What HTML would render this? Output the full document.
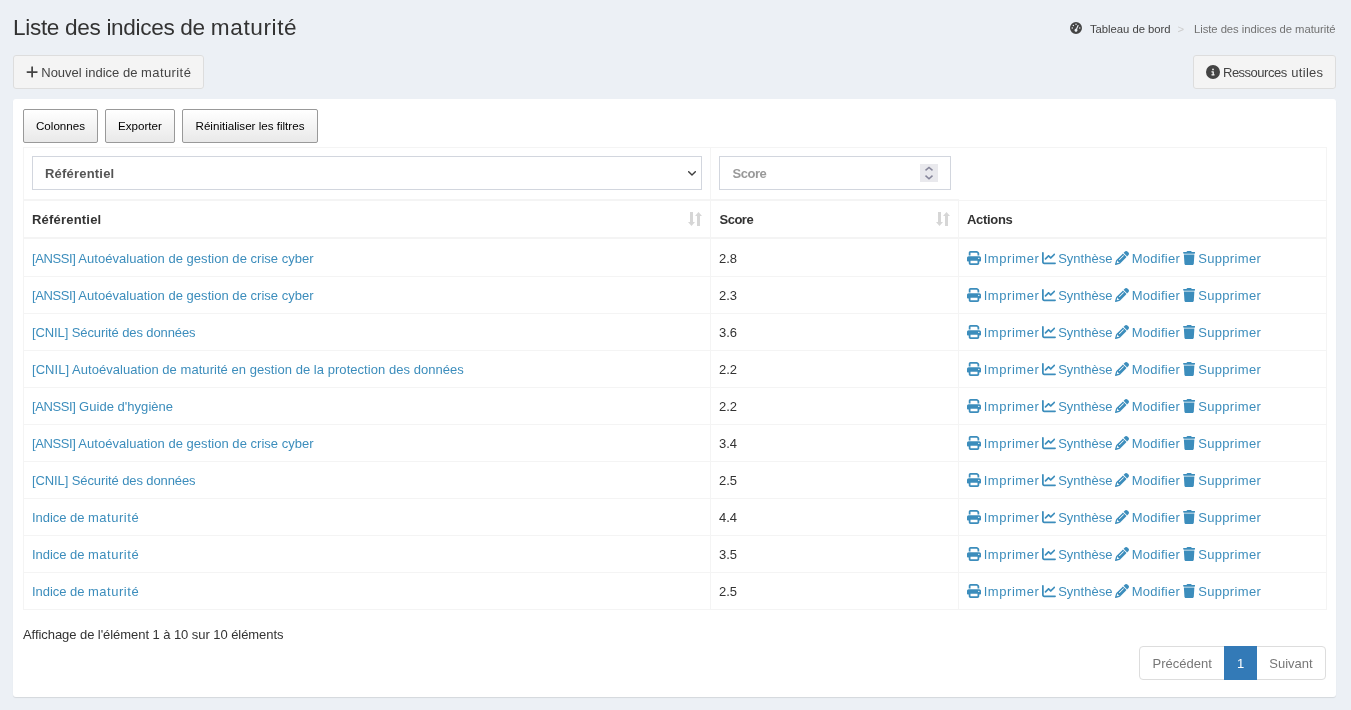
<!DOCTYPE html>
<html lang="fr">
<head>
<meta charset="utf-8">
<title>Liste des indices de maturité</title>
<style>
*{box-sizing:border-box}
html,body{margin:0;padding:0}
body{width:1351px;height:710px;overflow:hidden;background:#ecf0f5;color:#333;font-family:"Liberation Sans",sans-serif;font-size:13px;line-height:20px;position:relative}
a{color:#3c8dbc;text-decoration:none}
svg{display:inline-block;fill:currentColor;vertical-align:middle}
i{font-style:normal}
h1{position:absolute;left:13px;top:11px;margin:0;font-size:22.6px;line-height:34px;font-weight:400;color:#333;white-space:nowrap}
.t1{letter-spacing:-0.33px}
.t2{letter-spacing:0.6px}
.breadcrumb{position:absolute;left:0;top:19px;width:1351px;height:20px;margin:0;padding:0;list-style:none;font-size:11.3px;line-height:20px;white-space:nowrap;color:#727272}
.breadcrumb li{position:absolute;top:0;display:block}
.breadcrumb li a{color:#444}
.breadcrumb .gi{position:absolute;left:-19.600px;top:3px}
.breadcrumb .b1{left:1090px;letter-spacing:-0.04px}
.breadcrumb .sep{left:1177.500px;color:#ccc}
.breadcrumb .b2{left:1194px;letter-spacing:-0.06px}
.btn{position:absolute;top:55px;height:34px;border:1px solid #ddd;border-radius:3px;background:#f4f4f4;color:#444;font-size:13px;line-height:32px;padding:1px 12px 0;white-space:nowrap}
.btn1{left:13px;width:191px}
.btn2{left:1193px;width:143px}
.btn svg{position:relative;top:-1.900px;margin-right:3px}
.n1{letter-spacing:0}
.n2{letter-spacing:0.42px}
.u1{letter-spacing:-0.5px}
.u2{letter-spacing:0.3px;margin-left:1.500px}
.box{position:absolute;left:13px;top:99px;width:1323px;height:598px;background:#fff;border-radius:3px;box-shadow:0 1px 1px rgba(0,0,0,.1)}
.dtb{position:absolute;top:10px;height:34px;border:1px solid #999;border-radius:2px;background:linear-gradient(to bottom,#fff 0%,#e9e9e9 100%);color:#000;font-size:11.6px;line-height:32px;text-align:center;white-space:nowrap}
.d1{left:10px;width:75px}
.d2{left:92px;width:70px}
.d3{left:169px;width:136px}
table{position:absolute;left:10px;top:48px;width:1303px;border-collapse:collapse;table-layout:fixed;border:1px solid #f4f4f4}
th,td{border:1px solid #f4f4f4;padding:9px 8px 7px;text-align:left;vertical-align:middle;line-height:20px;white-space:nowrap;overflow:hidden}
thead th{border-bottom:2px solid #f4f4f4;font-weight:700;color:#333;position:relative}
tbody td{height:37px}
tbody tr:first-child td{padding-top:10px}
.fr th,.fr td{padding:8px 8px 9px}
.fr th:nth-child(2){border-right:none}
.sel,.inp{display:block;height:34px;border:1px solid #d2d6de;background:#fff;font-weight:700;font-size:13px;line-height:32px;padding:1px 12px 0;position:relative}
.sel{color:#555;width:670px}
.inp{color:#999;width:232px}
.chev{position:absolute;right:5px;top:14px}
.spin{position:absolute;right:12px;top:7px;width:18px;height:18px;background:#e9e9ed;display:block}
.spin svg{position:absolute;left:0;top:0}
.sort{position:absolute;right:8px;top:11px;line-height:14px;height:14px;width:14px}
.sort svg{display:block}
.info{position:absolute;left:10px;top:526px;line-height:20px;white-space:nowrap}
.pag{position:absolute;right:10px;top:547px;height:34px;display:flex;font-size:13px;line-height:32px}
.pag b{font-weight:400}
.pag span{display:block;border:1px solid #ddd;margin-left:-1px;padding:1px 0 0;text-align:center;color:#777;background:#fff}
.pag span.first{border-radius:4px 0 0 4px;margin-left:0;width:85.600px}
.pag span.last{border-radius:0 4px 4px 0;width:70px}
.pag span.act{background:#337ab7;border-color:#337ab7;color:#fff;width:33px;position:relative;z-index:2}
.acts{position:relative}
.acts div{position:relative;height:20px}
.acts a{position:absolute;top:0;left:0;display:block;white-space:nowrap}
.acts svg{margin-right:2.700px;position:relative;top:-1.900px}
.acts .a2{left:74.800px}
.acts .a3{left:148.100px}
.acts .a4{left:216.200px}
.a1 span{letter-spacing:0.55px}
.a2 span{letter-spacing:0;margin-left:-0.300px}
.a3 span{letter-spacing:0.25px}
.a4 span{letter-spacing:0.34px}
.pa{letter-spacing:-0.4px}
.r1{letter-spacing:0.03px}
.r2{letter-spacing:-0.1px}
.r3{letter-spacing:0.045px}
.r4{letter-spacing:0.03px}
.i1{letter-spacing:-0.05px}
.i2{letter-spacing:0.55px}
.h1t{letter-spacing:0.2px}
.h2t{letter-spacing:-0.5px;margin-left:0.500px}
.h3t{letter-spacing:-0.32px}
.sel span{letter-spacing:0.2px}
.inp span{letter-spacing:-0.5px;margin-left:0.600px}
.info span{letter-spacing:-0.06px}
h1,.btn,.box,.breadcrumb{will-change:transform}
</style>
</head>
<body>
<h1><span class="t1">Liste des indices de </span><span class="t2">maturité</span></h1>
<ol class="breadcrumb">
<li class="b1"><a><svg class="gi" width="12" height="12" viewBox="0 0 512 512" style=""><path d="M0 256a256 256 0 1 1 512 0A256 256 0 1 1 0 256zM288 96a32 32 0 1 0 -64 0 32 32 0 1 0 64 0zM256 416c35.300 0 64-28.700 64-64c0-17.400-6.900-33.100-18.100-44.600L366 161.700c5.300-12.100-.2-26.300-12.300-31.600s-26.300 .2-31.600 12.300L257.900 288c-.6 0-1.300 0-1.900 0c-35.300 0-64 28.700-64 64s28.700 64 64 64zM176 144a32 32 0 1 0 -64 0 32 32 0 1 0 64 0zM96 288a32 32 0 1 0 0-64 32 32 0 1 0 0 64zm352-32a32 32 0 1 0 -64 0 32 32 0 1 0 64 0z"/></svg><span>Tableau de bord</span></a></li><li class="sep">&gt;</li><li class="b2">Liste des indices de maturité</li>
</ol>
<a class="btn btn1"><svg class="pi" width="12.25" height="14" viewBox="0 0 448 512" style=""><path d="M256 80c0-17.700-14.300-32-32-32s-32 14.300-32 32V224H48c-17.700 0-32 14.300-32 32s14.300 32 32 32H192V432c0 17.700 14.300 32 32 32s32-14.300 32-32V288H400c17.700 0 32-14.300 32-32s-14.300-32-32-32H256V80z"/></svg><span class="n1">Nouvel indice de </span><span class="n2">maturité</span></a>
<a class="btn btn2"><svg class="ii" width="14" height="14" viewBox="0 0 512 512" style=""><path d="M256 512A256 256 0 1 0 256 0a256 256 0 1 0 0 512zM216 336h24V272H216c-13.300 0-24-10.700-24-24s10.700-24 24-24h48c13.300 0 24 10.700 24 24v88h8c13.300 0 24 10.700 24 24s-10.700 24-24 24H216c-13.300 0-24-10.700-24-24s10.700-24 24-24zm40-208a32 32 0 1 1 0 64 32 32 0 1 1 0-64z"/></svg><span class="u1">Ressources </span><span class="u2">utiles</span></a>
<div class="box">
<span class="dtb d1"><span>Colonnes</span></span>
<span class="dtb d2"><span>Exporter</span></span>
<span class="dtb d3"><span>Réinitialiser les filtres</span></span>
<table>
<colgroup><col style="width:687px"><col style="width:248px"><col style="width:368px"></colgroup>
<thead>
<tr class="fr"><th><span class="sel"><span>Référentiel</span><svg class="chev" width="8" height="5" viewBox="0 0 8 5"><path d="M0.700 0.700L4 4 7.300 0.700" fill="none" stroke="#3d3d3d" stroke-width="1.400" stroke-linecap="round" stroke-linejoin="round"/></svg></span></th><th><span class="inp"><span>Score</span><i class="spin"><svg width="18" height="18" viewBox="0 0 18 18"><path d="M5.500 6.400L9 3.400 12.500 6.400M5.500 11.600L9 14.700 12.500 11.600" fill="none" stroke="#85859a" stroke-width="1.500"/></svg></i></span></th></tr>
<tr class="hr"><th><span class="h1t">Référentiel</span><i class="sort"><svg width="14" height="14" viewBox="0 0 14 14"><path d="M2 0h3v10h2L3.500 14 0 10h2zM9 14h3V4h2L10.500 0 7 4h2z" fill="#d6d6d6"/></svg></i></th><th><span class="h2t">Score</span><i class="sort"><svg width="14" height="14" viewBox="0 0 14 14"><path d="M2 0h3v10h2L3.500 14 0 10h2zM9 14h3V4h2L10.500 0 7 4h2z" fill="#d6d6d6"/></svg></i></th><th><span class="h3t">Actions</span></th></tr>
</thead>
<tbody>
<tr><td><a class="ref r1"><span class="pa">[ANSSI]</span> Autoévaluation de gestion de crise cyber</a></td><td>2.8</td><td class="acts"><div><a class="a1"><svg class="" width="14" height="14" viewBox="0 0 512 512" style=""><path d="M128 0C92.700 0 64 28.700 64 64v96h64V64H354.700L384 93.300V160h64V93.300c0-17-6.700-33.300-18.700-45.300L400 18.700C388 6.700 371.700 0 354.700 0H128zM384 352v32 64H128V384 368 352H384zm64 32h32c17.700 0 32-14.300 32-32V256c0-35.300-28.700-64-64-64H64c-35.300 0-64 28.700-64 64v96c0 17.700 14.300 32 32 32H64v64c0 35.300 28.700 64 64 64H384c35.300 0 64-28.700 64-64V384zM432 248a24 24 0 1 1 0 48 24 24 0 1 1 0-48z"/></svg><span>Imprimer</span></a><a class="a2"><svg class="" width="14" height="14" viewBox="0 0 512 512" style=""><path d="M64 64c0-17.700-14.300-32-32-32S0 46.300 0 64V400c0 44.200 35.800 80 80 80H480c17.700 0 32-14.300 32-32s-14.300-32-32-32H80c-8.800 0-16-7.200-16-16V64zm406.600 86.600c12.500-12.500 12.500-32.800 0-45.300s-32.800-12.500-45.300 0L320 210.700l-57.400-57.400c-12.500-12.500-32.800-12.500-45.300 0l-112 112c-12.500 12.500-12.500 32.800 0 45.300s32.800 12.500 45.300 0L240 221.300l57.400 57.400c12.500 12.500 32.800 12.500 45.300 0l128-128z"/></svg><span>Synthèse</span></a><a class="a3"><svg class="" width="14" height="14" viewBox="0 0 512 512" style=""><path d="M410.300 231l11.300-11.300-33.900-33.900-62.100-62.100L291.700 89.800l-11.300 11.300-22.600 22.600L58.600 322.900c-10.400 10.400-18 23.300-22.200 37.400L1 480.700c-2.500 8.400-.2 17.500 6.100 23.700s15.300 8.500 23.700 6.100l120.300-35.400c14.100-4.200 27-11.800 37.400-22.200L387.700 253.700 410.300 231zM160 399.400l-9.100 22.700c-4 3.100-8.500 5.400-13.300 6.900L59.400 452l23-78.100c1.400-4.900 3.800-9.400 6.900-13.300l22.700-9.100v32c0 8.800 7.200 16 16 16h32zM362.700 18.700L348.300 33.200 325.700 55.800 314.300 67.100l33.900 33.900 62.100 62.100 33.900 33.900 11.300-11.300 22.600-22.600 14.500-14.500c25-25 25-65.500 0-90.500L453.300 18.700c-25-25-65.500-25-90.500 0zm-47.400 168l-144 144c-6.200 6.200-16.400 6.200-22.600 0s-6.200-16.400 0-22.600l144-144c6.200-6.200 16.400-6.200 22.600 0s6.200 16.400 0 22.600z"/></svg><span>Modifier</span></a><a class="a4"><svg class="" width="12.25" height="14" viewBox="0 0 448 512" style=""><path d="M135.200 17.700L128 32H32C14.300 32 0 46.300 0 64S14.300 96 32 96H416c17.700 0 32-14.300 32-32s-14.300-32-32-32H320l-7.200-14.300C307.400 6.800 296.300 0 284.200 0H163.800c-12.100 0-23.200 6.800-28.600 17.700zM416 128H32L53.200 467c1.600 25.300 22.600 45 47.900 45H346.900c25.300 0 46.300-19.700 47.900-45L416 128z"/></svg><span>Supprimer</span></a></div></td></tr>
<tr><td><a class="ref r1"><span class="pa">[ANSSI]</span> Autoévaluation de gestion de crise cyber</a></td><td>2.3</td><td class="acts"><div><a class="a1"><svg class="" width="14" height="14" viewBox="0 0 512 512" style=""><path d="M128 0C92.700 0 64 28.700 64 64v96h64V64H354.700L384 93.300V160h64V93.300c0-17-6.700-33.300-18.700-45.300L400 18.700C388 6.700 371.700 0 354.700 0H128zM384 352v32 64H128V384 368 352H384zm64 32h32c17.700 0 32-14.300 32-32V256c0-35.300-28.700-64-64-64H64c-35.300 0-64 28.700-64 64v96c0 17.700 14.300 32 32 32H64v64c0 35.300 28.700 64 64 64H384c35.300 0 64-28.700 64-64V384zM432 248a24 24 0 1 1 0 48 24 24 0 1 1 0-48z"/></svg><span>Imprimer</span></a><a class="a2"><svg class="" width="14" height="14" viewBox="0 0 512 512" style=""><path d="M64 64c0-17.700-14.300-32-32-32S0 46.300 0 64V400c0 44.200 35.800 80 80 80H480c17.700 0 32-14.300 32-32s-14.300-32-32-32H80c-8.800 0-16-7.200-16-16V64zm406.600 86.600c12.500-12.500 12.500-32.800 0-45.300s-32.800-12.500-45.300 0L320 210.700l-57.400-57.400c-12.500-12.500-32.800-12.500-45.300 0l-112 112c-12.500 12.500-12.500 32.800 0 45.300s32.800 12.500 45.300 0L240 221.300l57.400 57.400c12.500 12.500 32.800 12.500 45.300 0l128-128z"/></svg><span>Synthèse</span></a><a class="a3"><svg class="" width="14" height="14" viewBox="0 0 512 512" style=""><path d="M410.300 231l11.300-11.300-33.900-33.900-62.100-62.100L291.700 89.800l-11.300 11.300-22.600 22.600L58.600 322.900c-10.400 10.400-18 23.300-22.200 37.400L1 480.700c-2.500 8.400-.2 17.500 6.100 23.700s15.300 8.500 23.700 6.100l120.300-35.400c14.100-4.200 27-11.800 37.400-22.200L387.700 253.700 410.300 231zM160 399.400l-9.100 22.700c-4 3.100-8.500 5.400-13.300 6.900L59.400 452l23-78.100c1.400-4.900 3.800-9.400 6.900-13.300l22.700-9.100v32c0 8.800 7.200 16 16 16h32zM362.700 18.700L348.300 33.200 325.700 55.800 314.300 67.100l33.900 33.900 62.100 62.100 33.900 33.900 11.300-11.300 22.600-22.600 14.500-14.500c25-25 25-65.500 0-90.500L453.300 18.700c-25-25-65.500-25-90.500 0zm-47.400 168l-144 144c-6.200 6.200-16.400 6.200-22.600 0s-6.200-16.400 0-22.600l144-144c6.200-6.200 16.400-6.200 22.600 0s6.200 16.400 0 22.600z"/></svg><span>Modifier</span></a><a class="a4"><svg class="" width="12.25" height="14" viewBox="0 0 448 512" style=""><path d="M135.200 17.700L128 32H32C14.300 32 0 46.300 0 64S14.300 96 32 96H416c17.700 0 32-14.300 32-32s-14.300-32-32-32H320l-7.200-14.300C307.400 6.800 296.300 0 284.200 0H163.800c-12.100 0-23.200 6.800-28.600 17.700zM416 128H32L53.200 467c1.600 25.300 22.600 45 47.900 45H346.900c25.300 0 46.300-19.700 47.900-45L416 128z"/></svg><span>Supprimer</span></a></div></td></tr>
<tr><td><a class="ref r2">[CNIL] Sécurité des données</a></td><td>3.6</td><td class="acts"><div><a class="a1"><svg class="" width="14" height="14" viewBox="0 0 512 512" style=""><path d="M128 0C92.700 0 64 28.700 64 64v96h64V64H354.700L384 93.300V160h64V93.300c0-17-6.700-33.300-18.700-45.300L400 18.700C388 6.700 371.700 0 354.700 0H128zM384 352v32 64H128V384 368 352H384zm64 32h32c17.700 0 32-14.300 32-32V256c0-35.300-28.700-64-64-64H64c-35.300 0-64 28.700-64 64v96c0 17.700 14.300 32 32 32H64v64c0 35.300 28.700 64 64 64H384c35.300 0 64-28.700 64-64V384zM432 248a24 24 0 1 1 0 48 24 24 0 1 1 0-48z"/></svg><span>Imprimer</span></a><a class="a2"><svg class="" width="14" height="14" viewBox="0 0 512 512" style=""><path d="M64 64c0-17.700-14.300-32-32-32S0 46.300 0 64V400c0 44.200 35.800 80 80 80H480c17.700 0 32-14.300 32-32s-14.300-32-32-32H80c-8.800 0-16-7.200-16-16V64zm406.600 86.600c12.500-12.500 12.500-32.800 0-45.300s-32.800-12.500-45.300 0L320 210.700l-57.400-57.400c-12.500-12.500-32.800-12.500-45.300 0l-112 112c-12.500 12.500-12.500 32.800 0 45.300s32.800 12.500 45.300 0L240 221.300l57.400 57.400c12.500 12.500 32.800 12.500 45.300 0l128-128z"/></svg><span>Synthèse</span></a><a class="a3"><svg class="" width="14" height="14" viewBox="0 0 512 512" style=""><path d="M410.300 231l11.300-11.300-33.900-33.900-62.100-62.100L291.700 89.800l-11.300 11.300-22.600 22.600L58.600 322.900c-10.400 10.400-18 23.300-22.200 37.400L1 480.700c-2.500 8.400-.2 17.500 6.100 23.700s15.300 8.500 23.700 6.100l120.300-35.400c14.100-4.200 27-11.800 37.400-22.200L387.700 253.700 410.300 231zM160 399.400l-9.100 22.700c-4 3.100-8.500 5.400-13.300 6.900L59.400 452l23-78.100c1.400-4.900 3.800-9.400 6.900-13.300l22.700-9.100v32c0 8.800 7.200 16 16 16h32zM362.700 18.700L348.300 33.200 325.700 55.800 314.300 67.100l33.900 33.900 62.100 62.100 33.900 33.900 11.300-11.300 22.600-22.600 14.500-14.500c25-25 25-65.500 0-90.500L453.300 18.700c-25-25-65.500-25-90.500 0zm-47.400 168l-144 144c-6.200 6.200-16.400 6.200-22.600 0s-6.200-16.400 0-22.600l144-144c6.200-6.200 16.400-6.200 22.600 0s6.200 16.400 0 22.600z"/></svg><span>Modifier</span></a><a class="a4"><svg class="" width="12.25" height="14" viewBox="0 0 448 512" style=""><path d="M135.200 17.700L128 32H32C14.300 32 0 46.300 0 64S14.300 96 32 96H416c17.700 0 32-14.300 32-32s-14.300-32-32-32H320l-7.200-14.300C307.400 6.800 296.300 0 284.200 0H163.800c-12.100 0-23.200 6.800-28.600 17.700zM416 128H32L53.200 467c1.600 25.300 22.600 45 47.900 45H346.900c25.300 0 46.300-19.700 47.900-45L416 128z"/></svg><span>Supprimer</span></a></div></td></tr>
<tr><td><a class="ref r3">[CNIL] Autoévaluation de maturité en gestion de la protection des données</a></td><td>2.2</td><td class="acts"><div><a class="a1"><svg class="" width="14" height="14" viewBox="0 0 512 512" style=""><path d="M128 0C92.700 0 64 28.700 64 64v96h64V64H354.700L384 93.300V160h64V93.300c0-17-6.700-33.300-18.700-45.300L400 18.700C388 6.700 371.700 0 354.700 0H128zM384 352v32 64H128V384 368 352H384zm64 32h32c17.700 0 32-14.300 32-32V256c0-35.300-28.700-64-64-64H64c-35.300 0-64 28.700-64 64v96c0 17.700 14.300 32 32 32H64v64c0 35.300 28.700 64 64 64H384c35.300 0 64-28.700 64-64V384zM432 248a24 24 0 1 1 0 48 24 24 0 1 1 0-48z"/></svg><span>Imprimer</span></a><a class="a2"><svg class="" width="14" height="14" viewBox="0 0 512 512" style=""><path d="M64 64c0-17.700-14.300-32-32-32S0 46.300 0 64V400c0 44.200 35.800 80 80 80H480c17.700 0 32-14.300 32-32s-14.300-32-32-32H80c-8.800 0-16-7.200-16-16V64zm406.600 86.600c12.500-12.500 12.500-32.800 0-45.300s-32.800-12.500-45.300 0L320 210.700l-57.400-57.400c-12.500-12.500-32.800-12.500-45.300 0l-112 112c-12.500 12.500-12.500 32.800 0 45.300s32.800 12.500 45.300 0L240 221.300l57.400 57.400c12.500 12.500 32.800 12.500 45.300 0l128-128z"/></svg><span>Synthèse</span></a><a class="a3"><svg class="" width="14" height="14" viewBox="0 0 512 512" style=""><path d="M410.300 231l11.300-11.300-33.900-33.900-62.100-62.100L291.700 89.800l-11.300 11.300-22.600 22.600L58.600 322.900c-10.400 10.400-18 23.300-22.200 37.400L1 480.700c-2.500 8.400-.2 17.500 6.100 23.700s15.300 8.500 23.700 6.100l120.300-35.400c14.100-4.200 27-11.800 37.400-22.200L387.700 253.700 410.300 231zM160 399.400l-9.100 22.700c-4 3.100-8.500 5.400-13.300 6.900L59.400 452l23-78.100c1.400-4.900 3.800-9.400 6.900-13.300l22.700-9.100v32c0 8.800 7.200 16 16 16h32zM362.700 18.700L348.300 33.200 325.700 55.800 314.300 67.100l33.900 33.900 62.100 62.100 33.900 33.900 11.300-11.300 22.600-22.600 14.500-14.500c25-25 25-65.500 0-90.500L453.300 18.700c-25-25-65.500-25-90.500 0zm-47.400 168l-144 144c-6.200 6.200-16.400 6.200-22.600 0s-6.200-16.400 0-22.600l144-144c6.200-6.200 16.400-6.200 22.600 0s6.200 16.400 0 22.600z"/></svg><span>Modifier</span></a><a class="a4"><svg class="" width="12.25" height="14" viewBox="0 0 448 512" style=""><path d="M135.200 17.700L128 32H32C14.300 32 0 46.300 0 64S14.300 96 32 96H416c17.700 0 32-14.300 32-32s-14.300-32-32-32H320l-7.200-14.300C307.400 6.800 296.300 0 284.200 0H163.800c-12.100 0-23.200 6.800-28.600 17.700zM416 128H32L53.200 467c1.600 25.300 22.600 45 47.900 45H346.900c25.300 0 46.300-19.700 47.900-45L416 128z"/></svg><span>Supprimer</span></a></div></td></tr>
<tr><td><a class="ref r4"><span class="pa">[ANSSI]</span> Guide d'hygiène</a></td><td>2.2</td><td class="acts"><div><a class="a1"><svg class="" width="14" height="14" viewBox="0 0 512 512" style=""><path d="M128 0C92.700 0 64 28.700 64 64v96h64V64H354.700L384 93.300V160h64V93.300c0-17-6.700-33.300-18.700-45.300L400 18.700C388 6.700 371.700 0 354.700 0H128zM384 352v32 64H128V384 368 352H384zm64 32h32c17.700 0 32-14.300 32-32V256c0-35.300-28.700-64-64-64H64c-35.300 0-64 28.700-64 64v96c0 17.700 14.300 32 32 32H64v64c0 35.300 28.700 64 64 64H384c35.300 0 64-28.700 64-64V384zM432 248a24 24 0 1 1 0 48 24 24 0 1 1 0-48z"/></svg><span>Imprimer</span></a><a class="a2"><svg class="" width="14" height="14" viewBox="0 0 512 512" style=""><path d="M64 64c0-17.700-14.300-32-32-32S0 46.300 0 64V400c0 44.200 35.800 80 80 80H480c17.700 0 32-14.300 32-32s-14.300-32-32-32H80c-8.800 0-16-7.200-16-16V64zm406.600 86.600c12.500-12.500 12.500-32.800 0-45.300s-32.800-12.500-45.300 0L320 210.700l-57.400-57.400c-12.500-12.500-32.800-12.500-45.300 0l-112 112c-12.500 12.500-12.500 32.800 0 45.300s32.800 12.500 45.300 0L240 221.300l57.400 57.400c12.500 12.500 32.800 12.500 45.300 0l128-128z"/></svg><span>Synthèse</span></a><a class="a3"><svg class="" width="14" height="14" viewBox="0 0 512 512" style=""><path d="M410.300 231l11.300-11.300-33.900-33.900-62.100-62.100L291.700 89.800l-11.300 11.300-22.600 22.600L58.600 322.900c-10.400 10.400-18 23.300-22.200 37.400L1 480.700c-2.500 8.400-.2 17.500 6.100 23.700s15.300 8.500 23.700 6.100l120.300-35.400c14.100-4.200 27-11.800 37.400-22.200L387.700 253.700 410.300 231zM160 399.400l-9.100 22.700c-4 3.100-8.500 5.400-13.300 6.900L59.400 452l23-78.100c1.400-4.900 3.800-9.400 6.900-13.300l22.700-9.100v32c0 8.800 7.200 16 16 16h32zM362.700 18.700L348.300 33.200 325.700 55.800 314.300 67.100l33.900 33.900 62.100 62.100 33.900 33.900 11.300-11.300 22.600-22.600 14.500-14.500c25-25 25-65.500 0-90.500L453.300 18.700c-25-25-65.500-25-90.500 0zm-47.400 168l-144 144c-6.200 6.200-16.400 6.200-22.600 0s-6.200-16.400 0-22.600l144-144c6.200-6.200 16.400-6.200 22.600 0s6.200 16.400 0 22.600z"/></svg><span>Modifier</span></a><a class="a4"><svg class="" width="12.25" height="14" viewBox="0 0 448 512" style=""><path d="M135.200 17.700L128 32H32C14.300 32 0 46.300 0 64S14.300 96 32 96H416c17.700 0 32-14.300 32-32s-14.300-32-32-32H320l-7.200-14.300C307.400 6.800 296.300 0 284.200 0H163.800c-12.100 0-23.200 6.800-28.600 17.700zM416 128H32L53.200 467c1.600 25.300 22.600 45 47.900 45H346.900c25.300 0 46.300-19.700 47.900-45L416 128z"/></svg><span>Supprimer</span></a></div></td></tr>
<tr><td><a class="ref r1"><span class="pa">[ANSSI]</span> Autoévaluation de gestion de crise cyber</a></td><td>3.4</td><td class="acts"><div><a class="a1"><svg class="" width="14" height="14" viewBox="0 0 512 512" style=""><path d="M128 0C92.700 0 64 28.700 64 64v96h64V64H354.700L384 93.300V160h64V93.300c0-17-6.700-33.300-18.700-45.300L400 18.700C388 6.700 371.700 0 354.700 0H128zM384 352v32 64H128V384 368 352H384zm64 32h32c17.700 0 32-14.300 32-32V256c0-35.300-28.700-64-64-64H64c-35.300 0-64 28.700-64 64v96c0 17.700 14.300 32 32 32H64v64c0 35.300 28.700 64 64 64H384c35.300 0 64-28.700 64-64V384zM432 248a24 24 0 1 1 0 48 24 24 0 1 1 0-48z"/></svg><span>Imprimer</span></a><a class="a2"><svg class="" width="14" height="14" viewBox="0 0 512 512" style=""><path d="M64 64c0-17.700-14.300-32-32-32S0 46.300 0 64V400c0 44.200 35.800 80 80 80H480c17.700 0 32-14.300 32-32s-14.300-32-32-32H80c-8.800 0-16-7.200-16-16V64zm406.600 86.600c12.500-12.500 12.500-32.800 0-45.300s-32.800-12.500-45.300 0L320 210.700l-57.400-57.400c-12.500-12.500-32.800-12.500-45.300 0l-112 112c-12.500 12.500-12.500 32.800 0 45.300s32.800 12.500 45.300 0L240 221.300l57.400 57.400c12.500 12.500 32.800 12.500 45.300 0l128-128z"/></svg><span>Synthèse</span></a><a class="a3"><svg class="" width="14" height="14" viewBox="0 0 512 512" style=""><path d="M410.300 231l11.300-11.300-33.900-33.900-62.100-62.100L291.700 89.800l-11.300 11.300-22.600 22.600L58.600 322.900c-10.400 10.400-18 23.300-22.200 37.400L1 480.700c-2.500 8.400-.2 17.500 6.100 23.700s15.300 8.500 23.700 6.100l120.300-35.400c14.100-4.200 27-11.800 37.400-22.200L387.700 253.700 410.300 231zM160 399.400l-9.100 22.700c-4 3.100-8.500 5.400-13.300 6.900L59.400 452l23-78.100c1.400-4.900 3.800-9.400 6.900-13.300l22.700-9.100v32c0 8.800 7.200 16 16 16h32zM362.700 18.700L348.300 33.200 325.700 55.800 314.300 67.100l33.900 33.900 62.100 62.100 33.900 33.900 11.300-11.300 22.600-22.600 14.500-14.500c25-25 25-65.500 0-90.500L453.300 18.700c-25-25-65.500-25-90.500 0zm-47.400 168l-144 144c-6.200 6.200-16.400 6.200-22.600 0s-6.200-16.400 0-22.600l144-144c6.200-6.200 16.400-6.200 22.600 0s6.200 16.400 0 22.600z"/></svg><span>Modifier</span></a><a class="a4"><svg class="" width="12.25" height="14" viewBox="0 0 448 512" style=""><path d="M135.200 17.700L128 32H32C14.300 32 0 46.300 0 64S14.300 96 32 96H416c17.700 0 32-14.300 32-32s-14.300-32-32-32H320l-7.200-14.300C307.400 6.800 296.300 0 284.200 0H163.800c-12.100 0-23.200 6.800-28.600 17.700zM416 128H32L53.200 467c1.600 25.300 22.600 45 47.900 45H346.900c25.300 0 46.300-19.700 47.900-45L416 128z"/></svg><span>Supprimer</span></a></div></td></tr>
<tr><td><a class="ref r2">[CNIL] Sécurité des données</a></td><td>2.5</td><td class="acts"><div><a class="a1"><svg class="" width="14" height="14" viewBox="0 0 512 512" style=""><path d="M128 0C92.700 0 64 28.700 64 64v96h64V64H354.700L384 93.300V160h64V93.300c0-17-6.700-33.300-18.700-45.300L400 18.700C388 6.700 371.700 0 354.700 0H128zM384 352v32 64H128V384 368 352H384zm64 32h32c17.700 0 32-14.300 32-32V256c0-35.300-28.700-64-64-64H64c-35.300 0-64 28.700-64 64v96c0 17.700 14.300 32 32 32H64v64c0 35.300 28.700 64 64 64H384c35.300 0 64-28.700 64-64V384zM432 248a24 24 0 1 1 0 48 24 24 0 1 1 0-48z"/></svg><span>Imprimer</span></a><a class="a2"><svg class="" width="14" height="14" viewBox="0 0 512 512" style=""><path d="M64 64c0-17.700-14.300-32-32-32S0 46.300 0 64V400c0 44.200 35.800 80 80 80H480c17.700 0 32-14.300 32-32s-14.300-32-32-32H80c-8.800 0-16-7.200-16-16V64zm406.600 86.600c12.500-12.500 12.500-32.800 0-45.300s-32.800-12.500-45.300 0L320 210.700l-57.400-57.400c-12.500-12.500-32.800-12.500-45.300 0l-112 112c-12.500 12.500-12.500 32.800 0 45.300s32.800 12.500 45.300 0L240 221.300l57.400 57.400c12.500 12.500 32.800 12.500 45.300 0l128-128z"/></svg><span>Synthèse</span></a><a class="a3"><svg class="" width="14" height="14" viewBox="0 0 512 512" style=""><path d="M410.300 231l11.300-11.300-33.900-33.900-62.100-62.100L291.700 89.800l-11.300 11.300-22.600 22.600L58.600 322.900c-10.400 10.400-18 23.300-22.200 37.400L1 480.700c-2.500 8.400-.2 17.500 6.100 23.700s15.300 8.500 23.700 6.100l120.300-35.400c14.100-4.200 27-11.800 37.400-22.200L387.700 253.700 410.300 231zM160 399.400l-9.100 22.700c-4 3.100-8.500 5.400-13.300 6.900L59.400 452l23-78.100c1.400-4.900 3.800-9.400 6.900-13.300l22.700-9.100v32c0 8.800 7.200 16 16 16h32zM362.700 18.700L348.300 33.200 325.700 55.800 314.300 67.100l33.900 33.900 62.100 62.100 33.900 33.900 11.300-11.300 22.600-22.600 14.500-14.500c25-25 25-65.500 0-90.500L453.300 18.700c-25-25-65.500-25-90.500 0zm-47.400 168l-144 144c-6.200 6.200-16.400 6.200-22.600 0s-6.200-16.400 0-22.600l144-144c6.200-6.200 16.400-6.200 22.600 0s6.200 16.400 0 22.600z"/></svg><span>Modifier</span></a><a class="a4"><svg class="" width="12.25" height="14" viewBox="0 0 448 512" style=""><path d="M135.200 17.700L128 32H32C14.300 32 0 46.300 0 64S14.300 96 32 96H416c17.700 0 32-14.300 32-32s-14.300-32-32-32H320l-7.200-14.300C307.400 6.800 296.300 0 284.200 0H163.800c-12.100 0-23.200 6.800-28.600 17.700zM416 128H32L53.200 467c1.600 25.300 22.600 45 47.900 45H346.900c25.300 0 46.300-19.700 47.900-45L416 128z"/></svg><span>Supprimer</span></a></div></td></tr>
<tr><td><a class="ref r5"><span class="i1">Indice de </span><span class="i2">maturité</span></a></td><td>4.4</td><td class="acts"><div><a class="a1"><svg class="" width="14" height="14" viewBox="0 0 512 512" style=""><path d="M128 0C92.700 0 64 28.700 64 64v96h64V64H354.700L384 93.300V160h64V93.300c0-17-6.700-33.300-18.700-45.300L400 18.700C388 6.700 371.700 0 354.700 0H128zM384 352v32 64H128V384 368 352H384zm64 32h32c17.700 0 32-14.300 32-32V256c0-35.300-28.700-64-64-64H64c-35.300 0-64 28.700-64 64v96c0 17.700 14.300 32 32 32H64v64c0 35.300 28.700 64 64 64H384c35.300 0 64-28.700 64-64V384zM432 248a24 24 0 1 1 0 48 24 24 0 1 1 0-48z"/></svg><span>Imprimer</span></a><a class="a2"><svg class="" width="14" height="14" viewBox="0 0 512 512" style=""><path d="M64 64c0-17.700-14.300-32-32-32S0 46.300 0 64V400c0 44.200 35.800 80 80 80H480c17.700 0 32-14.300 32-32s-14.300-32-32-32H80c-8.800 0-16-7.200-16-16V64zm406.600 86.600c12.500-12.500 12.500-32.800 0-45.300s-32.800-12.500-45.300 0L320 210.700l-57.400-57.400c-12.500-12.500-32.800-12.500-45.300 0l-112 112c-12.500 12.500-12.500 32.800 0 45.300s32.800 12.500 45.300 0L240 221.300l57.400 57.400c12.500 12.500 32.800 12.500 45.300 0l128-128z"/></svg><span>Synthèse</span></a><a class="a3"><svg class="" width="14" height="14" viewBox="0 0 512 512" style=""><path d="M410.300 231l11.300-11.300-33.900-33.900-62.100-62.100L291.700 89.800l-11.300 11.300-22.600 22.600L58.600 322.900c-10.400 10.400-18 23.300-22.200 37.400L1 480.700c-2.500 8.400-.2 17.500 6.100 23.700s15.300 8.500 23.700 6.100l120.300-35.400c14.100-4.200 27-11.800 37.400-22.200L387.700 253.700 410.300 231zM160 399.400l-9.100 22.700c-4 3.100-8.500 5.400-13.300 6.900L59.400 452l23-78.100c1.400-4.900 3.800-9.400 6.900-13.300l22.700-9.100v32c0 8.800 7.200 16 16 16h32zM362.700 18.700L348.300 33.200 325.700 55.800 314.300 67.100l33.900 33.900 62.100 62.100 33.900 33.900 11.300-11.300 22.600-22.600 14.500-14.500c25-25 25-65.500 0-90.500L453.300 18.700c-25-25-65.500-25-90.500 0zm-47.400 168l-144 144c-6.200 6.200-16.400 6.200-22.600 0s-6.200-16.400 0-22.600l144-144c6.200-6.200 16.400-6.200 22.600 0s6.200 16.400 0 22.600z"/></svg><span>Modifier</span></a><a class="a4"><svg class="" width="12.25" height="14" viewBox="0 0 448 512" style=""><path d="M135.200 17.700L128 32H32C14.300 32 0 46.300 0 64S14.300 96 32 96H416c17.700 0 32-14.300 32-32s-14.300-32-32-32H320l-7.200-14.300C307.400 6.800 296.300 0 284.200 0H163.800c-12.100 0-23.200 6.800-28.600 17.700zM416 128H32L53.200 467c1.600 25.300 22.600 45 47.900 45H346.900c25.300 0 46.300-19.700 47.900-45L416 128z"/></svg><span>Supprimer</span></a></div></td></tr>
<tr><td><a class="ref r5"><span class="i1">Indice de </span><span class="i2">maturité</span></a></td><td>3.5</td><td class="acts"><div><a class="a1"><svg class="" width="14" height="14" viewBox="0 0 512 512" style=""><path d="M128 0C92.700 0 64 28.700 64 64v96h64V64H354.700L384 93.300V160h64V93.300c0-17-6.700-33.300-18.700-45.300L400 18.700C388 6.700 371.700 0 354.700 0H128zM384 352v32 64H128V384 368 352H384zm64 32h32c17.700 0 32-14.300 32-32V256c0-35.300-28.700-64-64-64H64c-35.300 0-64 28.700-64 64v96c0 17.700 14.300 32 32 32H64v64c0 35.300 28.700 64 64 64H384c35.300 0 64-28.700 64-64V384zM432 248a24 24 0 1 1 0 48 24 24 0 1 1 0-48z"/></svg><span>Imprimer</span></a><a class="a2"><svg class="" width="14" height="14" viewBox="0 0 512 512" style=""><path d="M64 64c0-17.700-14.300-32-32-32S0 46.300 0 64V400c0 44.200 35.800 80 80 80H480c17.700 0 32-14.300 32-32s-14.300-32-32-32H80c-8.800 0-16-7.200-16-16V64zm406.600 86.600c12.500-12.500 12.500-32.800 0-45.300s-32.800-12.500-45.300 0L320 210.700l-57.400-57.400c-12.500-12.500-32.800-12.500-45.300 0l-112 112c-12.500 12.500-12.500 32.800 0 45.300s32.800 12.500 45.300 0L240 221.300l57.400 57.400c12.500 12.500 32.800 12.500 45.300 0l128-128z"/></svg><span>Synthèse</span></a><a class="a3"><svg class="" width="14" height="14" viewBox="0 0 512 512" style=""><path d="M410.300 231l11.300-11.300-33.900-33.900-62.100-62.100L291.700 89.800l-11.300 11.300-22.600 22.600L58.600 322.900c-10.400 10.400-18 23.300-22.200 37.400L1 480.700c-2.500 8.400-.2 17.500 6.100 23.700s15.300 8.500 23.700 6.100l120.300-35.400c14.100-4.200 27-11.800 37.400-22.200L387.700 253.700 410.300 231zM160 399.400l-9.100 22.700c-4 3.100-8.500 5.400-13.300 6.900L59.400 452l23-78.100c1.400-4.900 3.800-9.400 6.900-13.300l22.700-9.100v32c0 8.800 7.200 16 16 16h32zM362.700 18.700L348.300 33.200 325.700 55.800 314.300 67.100l33.900 33.900 62.100 62.100 33.900 33.900 11.300-11.300 22.600-22.600 14.500-14.500c25-25 25-65.500 0-90.500L453.300 18.700c-25-25-65.500-25-90.500 0zm-47.400 168l-144 144c-6.200 6.200-16.400 6.200-22.600 0s-6.200-16.400 0-22.600l144-144c6.200-6.200 16.400-6.200 22.600 0s6.200 16.400 0 22.600z"/></svg><span>Modifier</span></a><a class="a4"><svg class="" width="12.25" height="14" viewBox="0 0 448 512" style=""><path d="M135.200 17.700L128 32H32C14.300 32 0 46.300 0 64S14.300 96 32 96H416c17.700 0 32-14.300 32-32s-14.300-32-32-32H320l-7.200-14.300C307.400 6.800 296.300 0 284.200 0H163.800c-12.100 0-23.200 6.800-28.600 17.700zM416 128H32L53.200 467c1.600 25.300 22.600 45 47.900 45H346.900c25.300 0 46.300-19.700 47.900-45L416 128z"/></svg><span>Supprimer</span></a></div></td></tr>
<tr><td><a class="ref r5"><span class="i1">Indice de </span><span class="i2">maturité</span></a></td><td>2.5</td><td class="acts"><div><a class="a1"><svg class="" width="14" height="14" viewBox="0 0 512 512" style=""><path d="M128 0C92.700 0 64 28.700 64 64v96h64V64H354.700L384 93.300V160h64V93.300c0-17-6.700-33.300-18.700-45.300L400 18.700C388 6.700 371.700 0 354.700 0H128zM384 352v32 64H128V384 368 352H384zm64 32h32c17.700 0 32-14.300 32-32V256c0-35.300-28.700-64-64-64H64c-35.300 0-64 28.700-64 64v96c0 17.700 14.300 32 32 32H64v64c0 35.300 28.700 64 64 64H384c35.300 0 64-28.700 64-64V384zM432 248a24 24 0 1 1 0 48 24 24 0 1 1 0-48z"/></svg><span>Imprimer</span></a><a class="a2"><svg class="" width="14" height="14" viewBox="0 0 512 512" style=""><path d="M64 64c0-17.700-14.300-32-32-32S0 46.300 0 64V400c0 44.200 35.800 80 80 80H480c17.700 0 32-14.300 32-32s-14.300-32-32-32H80c-8.800 0-16-7.200-16-16V64zm406.600 86.600c12.500-12.500 12.500-32.800 0-45.300s-32.800-12.500-45.300 0L320 210.700l-57.400-57.400c-12.500-12.500-32.800-12.500-45.300 0l-112 112c-12.500 12.500-12.500 32.800 0 45.300s32.800 12.500 45.300 0L240 221.300l57.400 57.400c12.500 12.500 32.800 12.500 45.300 0l128-128z"/></svg><span>Synthèse</span></a><a class="a3"><svg class="" width="14" height="14" viewBox="0 0 512 512" style=""><path d="M410.300 231l11.300-11.300-33.900-33.900-62.100-62.100L291.700 89.800l-11.300 11.300-22.600 22.600L58.600 322.900c-10.400 10.400-18 23.300-22.200 37.400L1 480.700c-2.500 8.400-.2 17.500 6.100 23.700s15.300 8.500 23.700 6.100l120.300-35.400c14.100-4.200 27-11.800 37.400-22.200L387.700 253.700 410.300 231zM160 399.400l-9.100 22.700c-4 3.100-8.500 5.400-13.300 6.900L59.400 452l23-78.100c1.400-4.900 3.800-9.400 6.900-13.300l22.700-9.100v32c0 8.800 7.200 16 16 16h32zM362.700 18.700L348.300 33.200 325.700 55.800 314.300 67.100l33.900 33.900 62.100 62.100 33.900 33.900 11.300-11.300 22.600-22.600 14.500-14.500c25-25 25-65.500 0-90.500L453.300 18.700c-25-25-65.500-25-90.500 0zm-47.400 168l-144 144c-6.200 6.200-16.400 6.200-22.600 0s-6.200-16.400 0-22.600l144-144c6.200-6.200 16.400-6.200 22.600 0s6.200 16.400 0 22.600z"/></svg><span>Modifier</span></a><a class="a4"><svg class="" width="12.25" height="14" viewBox="0 0 448 512" style=""><path d="M135.200 17.700L128 32H32C14.300 32 0 46.300 0 64S14.300 96 32 96H416c17.700 0 32-14.300 32-32s-14.300-32-32-32H320l-7.200-14.300C307.400 6.800 296.300 0 284.200 0H163.800c-12.100 0-23.200 6.800-28.600 17.700zM416 128H32L53.200 467c1.600 25.300 22.600 45 47.900 45H346.900c25.300 0 46.300-19.700 47.900-45L416 128z"/></svg><span>Supprimer</span></a></div></td></tr>
</tbody>
</table>
<div class="info"><span>Affichage de l'élément 1 à 10 sur 10 éléments</span></div>
<div class="pag"><span class="first"><b>Précédent</b></span><span class="act"><b>1</b></span><span class="last"><b>Suivant</b></span></div>
</div>
</body>
</html>
